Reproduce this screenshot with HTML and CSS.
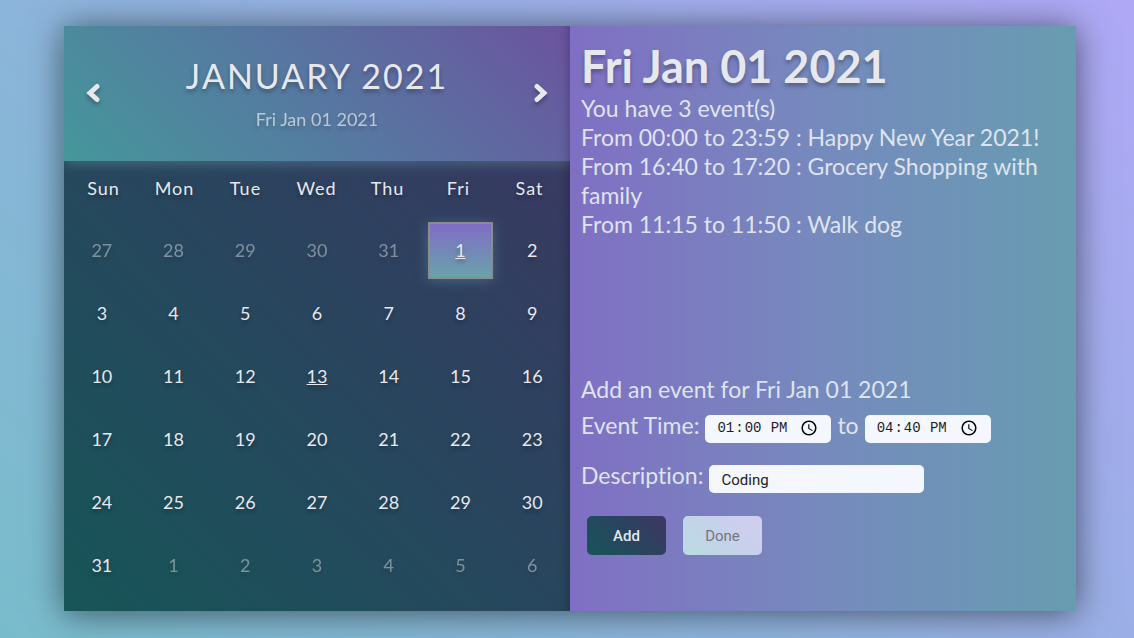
FILE: index.html
```html
<!DOCTYPE html>
<html lang="en">
<head>
<meta charset="utf-8">
<title>Calendar</title>
<link rel="stylesheet" href="styles.css">
<script src="calendar.js" defer></script>
</head>
<body>
<main class="planner">
  <section class="calendar">
    <header class="month">
      <button class="arrow" type="button" aria-label="Previous month">
        <svg viewBox="0 0 14 20" width="14" height="20"><path d="M11 3.500L4 10L11 16.500" /></svg>
      </button>
      <div class="month-text">
        <h1 class="month-name">JANUARY 2021</h1>
        <p class="month-date">Fri Jan 01 2021</p>
      </div>
      <button class="arrow" type="button" aria-label="Next month">
        <svg viewBox="0 0 14 20" width="14" height="20"><path d="M3 3.500L10 10L3 16.500" /></svg>
      </button>
    </header>
    <div class="weekdays">
      <div>Sun</div><div>Mon</div><div>Tue</div><div>Wed</div><div>Thu</div><div>Fri</div><div>Sat</div>
    </div>
    <div class="days"></div>
  </section>
  <section class="details">
    <h2 class="day-title">Fri Jan 01 2021</h2>
    <div class="events">
      <p>You have 3 event(s)</p>
      <p>From 00:00 to 23:59 : Happy New Year 2021!</p>
      <p>From 16:40 to 17:20 : Grocery Shopping with family</p>
      <p>From 11:15 to 11:50 : Walk dog</p>
    </div>
    <form class="event-form">
      <p>Add an event for Fri Jan 01 2021</p>
      <div class="field">
        <label for="start">Event Time:</label>
        <input class="time" id="start" type="time" value="13:00">
        <label for="end">to</label>
        <input class="time" id="end" type="time" value="16:40">
      </div>
      <div class="field">
        <label for="description">Description:</label>
        <input class="description" id="description" type="text" value="Coding">
      </div>
      <div class="actions">
        <button class="action add" type="button">Add</button>
        <button class="action done" type="button">Done</button>
      </div>
    </form>
  </section>
</main>
</body>
</html>
```
FILE: styles.css
```css
* {
  box-sizing: border-box;
}

body {
  margin: 0;
  min-height: 100vh;
  padding: 26px 58px 27px 64px;
  display: flex;
  background: linear-gradient(45deg, #78bccb, #afa8f6);
  color: #e6e8ee;
  font-family: Lato, "Open Sans", sans-serif;
  font-variant-ligatures: none;
}

h1, h2, p {
  margin: 0;
}

.planner {
  flex: 1;
  display: grid;
  grid-template-columns: 1fr 1fr;
  box-shadow: 0 2px 32px rgba(0, 0, 0, 0.55);
}

.calendar {
  display: flex;
  flex-direction: column;
  background: linear-gradient(45deg, #175558, #29455e 50%, #3e3563);
  box-shadow: inset -12px 0 12px -12px rgba(0, 0, 0, 0.3);
  text-shadow: 0 3px 4px rgba(0, 0, 0, 0.3);
}

.month {
  height: 135px;
  padding: 0 22px 2px;
  display: flex;
  align-items: center;
  justify-content: space-between;
  background: linear-gradient(45deg, #45979b, #5777a1 50%, #6b539f);
  box-shadow: inset -12px 0 12px -12px rgba(0, 0, 0, 0.3), 0 3px 12px rgba(110, 165, 175, 0.4);
}

.month-text {
  text-align: center;
}

.month-name {
  font-size: 34px;
  line-height: 42px;
  font-weight: 400;
  letter-spacing: 2px;
}

.month-date {
  margin-top: 10px;
  font-size: 18px;
  line-height: 24px;
  opacity: 0.7;
}

.arrow {
  display: flex;
  padding: 0;
  border: 0;
  background: none;
  color: inherit;
}

.arrow svg {
  fill: none;
  stroke: currentColor;
  stroke-width: 5;
  stroke-linecap: round;
  filter: drop-shadow(0 3px 2px rgba(0, 0, 0, 0.3));
}

.weekdays,
.days {
  display: grid;
  grid-template-columns: repeat(7, 1fr);
  text-align: center;
}

.weekdays {
  padding: 15px 5px 19px 4px;
  font-size: 18px;
  line-height: 24px;
  letter-spacing: 1px;
}

.days {
  padding: 0 2px;
  font-size: 18px;
}

.day {
  height: 57px;
  margin: 3px;
  padding: 0 0 2px;
  border: 2px solid transparent;
  background: none;
  color: inherit;
  font: inherit;
  text-shadow: inherit;
}

.outside {
  opacity: 0.45;
}

.has-event {
  text-decoration: underline;
}

.selected {
  border-color: #8b8b90;
  background: linear-gradient(#806dc4, #69a2ab);
  box-shadow: 0 2px 12px rgba(105, 160, 175, 0.4);
}

.details {
  padding: 12px 11px;
  background: linear-gradient(90deg, #806fc4, #768abd 50%, #6b97b5 85%, #689cb0);
  font-size: 23px;
  line-height: 29px;
  color: #dfe3ee;
}

.day-title {
  color: #e6e8ee;
  font-size: 45px;
  line-height: 56px;
  text-shadow: 0 3px 4px rgba(0, 0, 0, 0.3);
}

.events {
  min-height: 281px;
}

.field {
  display: flex;
  align-items: flex-end;
  gap: 6px;
  margin-top: 7px;
}

.field label {
  padding-bottom: 3px;
}

.field + .field {
  margin-top: 18px;
}

.field input {
  height: 28px;
  border: 0;
  border-radius: 5px;
  background: #f4f7fd;
  color: #1d2126;
}

.time {
  width: 126px;
  padding: 0 13px 2px 11px;
  font-family: "Liberation Mono", monospace;
  font-size: 14px;
}

.time::-webkit-datetime-edit-ampm-field {
  margin-left: 3px;
}

.time::-webkit-calendar-picker-indicator {
  width: 18px;
  height: 18px;
  margin: 0;
  padding: 0;
}

.description {
  width: 215px;
  padding: 2px 12px 0;
  font-family: Roboto, "Liberation Sans", sans-serif;
  font-size: 15px;
}

.actions {
  display: flex;
  gap: 17px;
  margin-top: 23px;
  padding-left: 6px;
}

.action {
  width: 79px;
  height: 39px;
  border: 0;
  border-radius: 5px;
  font-family: Roboto, "Liberation Sans", sans-serif;
  font-size: 15px;
}

.add {
  background: linear-gradient(45deg, #175558, #29455e 50%, #3e3563);
  color: #e6e8ee;
  font-weight: 500;
}

.done {
  background: linear-gradient(45deg, #b9dce2, #c5d2ea 50%, #d3cdf0);
  color: #73757e;
}
```
FILE: calendar.js
```javascript
const grid = document.querySelector(".days");
const start = new Date(2020, 11, 27);
const eventDays = [1, 13];

for (let i = 0; i < 42; i++) {
  const date = new Date(start);
  date.setDate(start.getDate() + i);
  const day = date.getDate();
  const inMonth = date.getMonth() === 0;
  const cell = document.createElement("button");
  cell.type = "button";
  cell.className = "day";
  cell.textContent = day;
  if (!inMonth) cell.classList.add("outside");
  if (inMonth && eventDays.includes(day)) cell.classList.add("has-event");
  if (inMonth && day === 1) cell.classList.add("selected");
  grid.append(cell);
}
```
